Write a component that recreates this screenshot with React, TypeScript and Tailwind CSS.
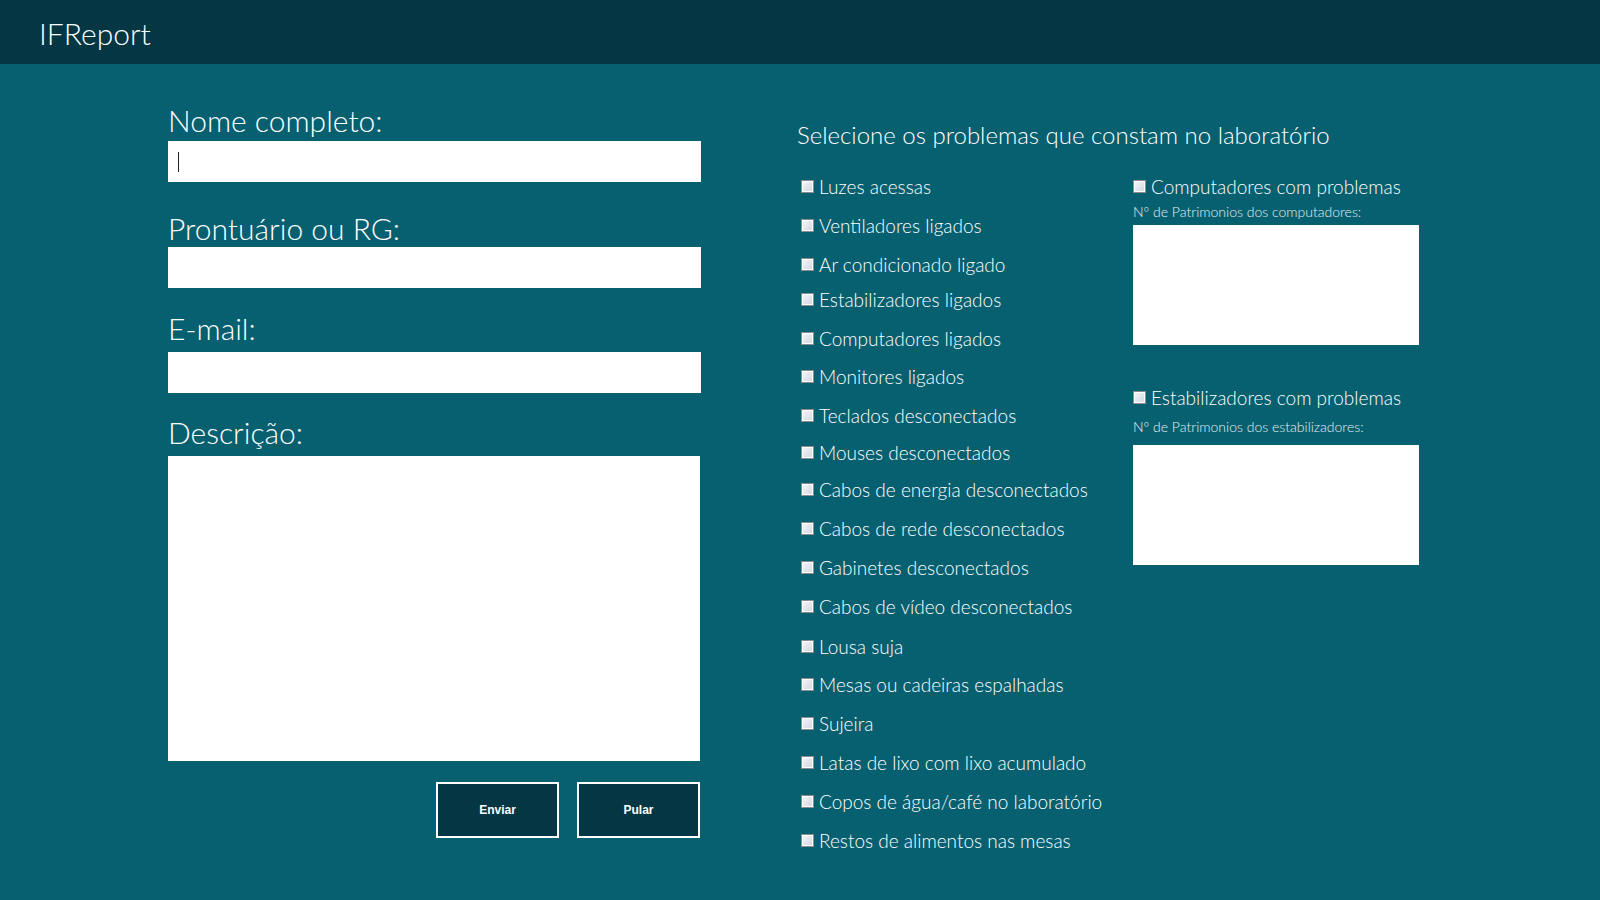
import React from 'react';

// Row heights come straight from the reference spacing (it is slightly uneven)
const problems: { label: string; h: string }[] = [
  { label: 'Luzes acessas', h: 'h-[39px]' },
  { label: 'Ventiladores ligados', h: 'h-[39px]' },
  { label: 'Ar condicionado ligado', h: 'h-[35px]' },
  { label: 'Estabilizadores ligados', h: 'h-[39px]' },
  { label: 'Computadores ligados', h: 'h-[38px]' },
  { label: 'Monitores ligados', h: 'h-[39px]' },
  { label: 'Teclados desconectados', h: 'h-[37px]' },
  { label: 'Mouses desconectados', h: 'h-[37px]' },
  { label: 'Cabos de energia desconectados', h: 'h-[39px]' },
  { label: 'Cabos de rede desconectados', h: 'h-[39px]' },
  { label: 'Gabinetes desconectados', h: 'h-[39px]' },
  { label: 'Cabos de vídeo desconectados', h: 'h-[40px]' },
  { label: 'Lousa suja', h: 'h-[38px]' },
  { label: 'Mesas ou cadeiras espalhadas', h: 'h-[39px]' },
  { label: 'Sujeira', h: 'h-[39px]' },
  { label: 'Latas de lixo com lixo acumulado', h: 'h-[39px]' },
  { label: 'Copos de água/café no laboratório', h: 'h-[39px]' },
  { label: 'Restos de alimentos nas mesas', h: 'h-[39px]' },
];

function CheckBox() {
  return (
    <span className="block w-[13px] h-[13px] shrink-0 border border-[#8b8d90] bg-linear-to-br from-[#f7f7f8] to-[#cfd6e1] shadow-[inset_0_0_0_1px_#ffffff]" />
  );
}

function FieldLabel({ children, className }: { children: React.ReactNode; className?: string }) {
  return (
    <div className={`h-[40px] text-[30px] leading-[40px] font-light text-white whitespace-nowrap ${className ?? ''}`}>
      {children}
    </div>
  );
}

export default function App() {
  return (
    <div
      className="min-h-screen w-full bg-[#06606f] text-white"
      style={{ fontFamily: 'Lato, "Open Sans", sans-serif' }}
    >
      <header className="h-[64px] bg-[#043644] flex items-center pl-[39px] pt-[2px]">
        <span className="text-[30px] font-light leading-none">IFReport</span>
      </header>

      <main className="flex items-start pl-[168px] pb-[62px]">
        {/* Formulário */}
        <div className="w-[533px] flex flex-col pt-[36px]">
          <FieldLabel>Nome completo:</FieldLabel>
          <div className="mt-[1px] h-[41px] bg-white flex items-center pl-[10px]">
            <span className="block w-px h-[20px] bg-[#222]" />
          </div>

          <FieldLabel className="mt-[26px]">Prontuário ou RG:</FieldLabel>
          <div className="-mt-px h-[41px] bg-white" />

          <FieldLabel className="mt-[20px]">E-mail:</FieldLabel>
          <div className="mt-[4px] h-[41px] bg-white" />

          <FieldLabel className="mt-[19px]">Descrição:</FieldLabel>
          <div className="mt-[4px] mr-px h-[305px] bg-white" />

          <div className="mt-[21px] mr-px flex justify-end gap-[18px]" style={{ fontFamily: '"Liberation Sans", Arial, sans-serif' }}>
            <button className="w-[123px] h-[56px] border-2 border-white bg-[#043644] text-[12px] font-bold text-white">
              Enviar
            </button>
            <button className="w-[123px] h-[56px] border-2 border-white bg-[#043644] text-[12px] font-bold text-white">
              Pular
            </button>
          </div>
        </div>

        {/* Problemas */}
        <div className="ml-[96px] flex flex-col pt-[55px]">
          <div className="h-[32px] text-[24px] leading-[32px] font-light whitespace-nowrap">
            Selecione os problemas que constam no laboratório
          </div>

          <div className="mt-[29px] flex">
            <div className="w-[336px] pl-[4px] flex flex-col">
              {problems.map((p) => (
                <div key={p.label} className={`${p.h} flex items-start gap-[5px]`}>
                  <CheckBox />
                  <span className="text-[19px] leading-[14px] font-light whitespace-nowrap">{p.label}</span>
                </div>
              ))}
            </div>

            <div className="flex flex-col">
              <div className="h-[24px] flex items-start gap-[5px]">
                <CheckBox />
                <span className="text-[19px] leading-[14px] font-light whitespace-nowrap">Computadores com problemas</span>
              </div>
              <div className="h-[16px] text-[14px] leading-[16px] font-light text-white/90 whitespace-nowrap">
                Nº de Patrimonios dos computadores:
              </div>
              <div className="mt-[5px] w-[286px] h-[120px] bg-white" />

              <div className="mt-[46px] h-[28px] flex items-start gap-[5px]">
                <CheckBox />
                <span className="text-[19px] leading-[14px] font-light whitespace-nowrap">Estabilizadores com problemas</span>
              </div>
              <div className="h-[16px] text-[14px] leading-[16px] font-light text-white/90 whitespace-nowrap">
                Nº de Patrimonios dos estabilizadores:
              </div>
              <div className="mt-[10px] w-[286px] h-[120px] bg-white" />
            </div>
          </div>
        </div>
      </main>
    </div>
  );
}
